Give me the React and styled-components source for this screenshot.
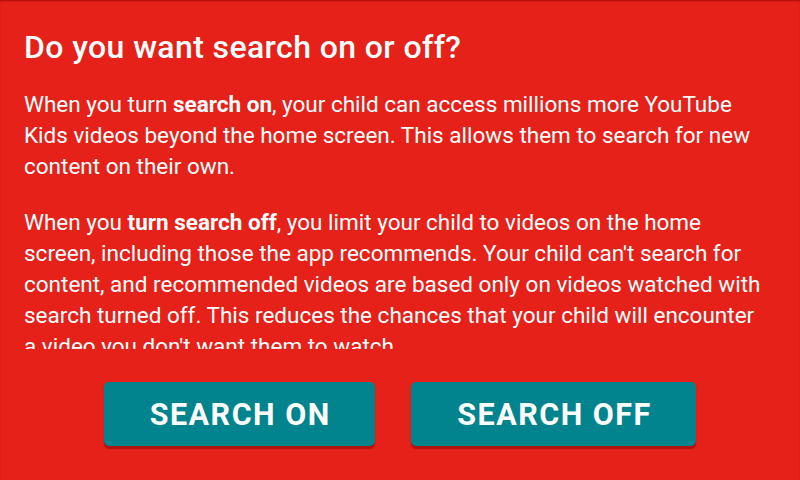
import React from "react";
import styled, { createGlobalStyle } from "styled-components";

const Global = createGlobalStyle`
  html, body { margin: 0; padding: 0; }
  body { font-family: Roboto, "Noto Sans", sans-serif; background: #e52119; }
  #root { width: 800px; height: 480px; }
`;

const Screen = styled.div`
  width: 800px;
  height: 480px;
  background: #e52119;
  display: flex;
  flex-direction: column;
  color: #fff;
  box-shadow: inset 0 2px 2px -1px rgba(120, 0, 0, 0.6);
  box-sizing: border-box;
`;

const Title = styled.h1`
  margin: 0;
  padding: 29px 24px 0;
  font-size: 32px;
  font-weight: 500;
  line-height: 36px;
  letter-spacing: 0.4px;
`;

const Scroll = styled.div`
  margin-top: 24px;
  padding: 0 34px 0 24px;
  height: 260px;
  overflow: hidden;
`;

const Para = styled.p`
  margin: 0 0 25px;
  font-size: 22.5px;
  line-height: 31px;
`;

const Actions = styled.div`
  flex: 1;
  display: flex;
  justify-content: center;
  align-items: flex-start;
  gap: 36px;
  padding-top: 33px;
`;

const Button = styled.button`
  height: 64px;
  padding: 0 44.5px 0 46px;
  border: none;
  border-radius: 5px;
  background: #02848e;
  color: #fff;
  font-family: Roboto, sans-serif;
  font-size: 30.5px;
  font-weight: 700;
  letter-spacing: 1.5px;
  box-shadow: 0 3px 1px rgba(130, 10, 10, 0.55);
`;

export default function App() {
  return (
    <>
      <Global />
      <Screen>
        <Title>Do you want search on or off?</Title>
        <Scroll>
          <Para>
            When you turn <b>search on</b>, your child can access millions more YouTube Kids
            videos beyond the home screen. This allows them to search for new content on their
            own.
          </Para>
          <Para>
            When you <b>turn search off</b>, you limit your child to videos on the home screen,
            including those the app recommends. Your child can't search for content, and
            recommended videos are based only on videos watched with search turned off. This
            reduces the chances that your child will encounter a video you don't want them to
            watch.
          </Para>
        </Scroll>
        <Actions>
          <Button>SEARCH ON</Button>
          <Button>SEARCH OFF</Button>
        </Actions>
      </Screen>
    </>
  );
}
